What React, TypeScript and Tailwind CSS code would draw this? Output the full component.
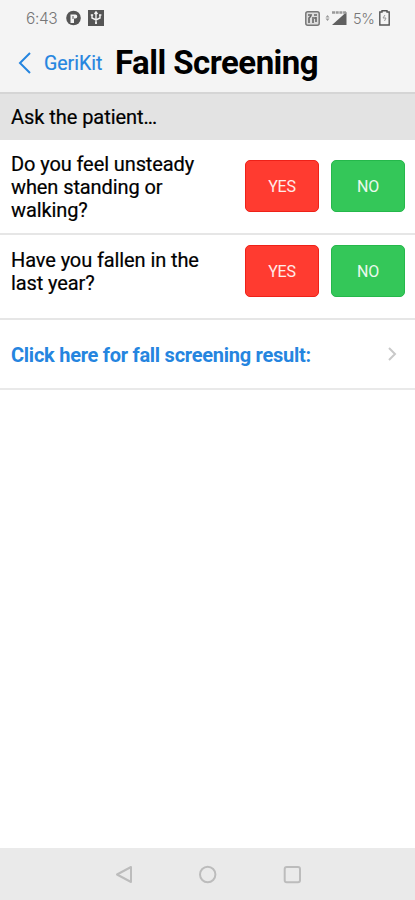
import React from "react";

function SystemBar() {
  return (
    <div className="flex h-9 items-center pl-[26px] pr-[25px] text-[#777]">
      <span className="w-[31px] whitespace-nowrap pt-px font-[Inter,sans-serif] text-[15.5px] font-light leading-5 tracking-[-0.4px]">6:43</span>
      <svg className="ml-[9px]" width="15" height="16" viewBox="0 0 15 16">
        <circle cx="7.5" cy="8" r="7.3" fill="#555" />
        <path d="M4.500 13V4.500h4.800a2 2 0 0 1 0 4H8V13Z" fill="#f4f4f4" />
        <path d="M7 6v3" stroke="#555" />
      </svg>
      <svg className="ml-[7px]" width="16" height="16" viewBox="0 0 16 16">
        <rect width="16" height="16" fill="#555" />
        <path d="M8 14V3M4 5v3l4 2 4-2V5M6.5 4 8 2l1.500 2M2.800 5h2.400M11 5h2.400M7 13h2" fill="none" stroke="#f4f4f4" strokeWidth="1.400" />
      </svg>
      <div className="grow" />
      <svg width="15" height="15" viewBox="0 0 15 15">
        <rect x=".8" y=".8" width="13.400" height="13.400" rx="2" fill="#ddd" stroke="#777" strokeWidth="1.500" />
        <path d="M4 12V7l2-2M8 12V8M11 11V6M3 4h4M9 4h3M7 7h4" fill="none" stroke="#666" strokeWidth="1.600" />
      </svg>
      <svg className="ml-[5px]" width="22" height="16" viewBox="0 0 22 16">
        <path d="M.5 7.500 2.500 5l2 2.500ZM.5 8.500l2 2.500 2-2.500Z" fill="#999" />
        <path d="M21.500 2v13H7Z" fill="#606060" />
        <path d="M7 2.500h14" stroke="#999" strokeWidth="2.500" strokeDasharray="3 .7" />
      </svg>
      <span className="ml-[6px] w-[24px] whitespace-nowrap pt-px font-[Inter,sans-serif] text-[14.5px] font-light leading-5 tracking-[-0.4px]">5%</span>
      <svg className="ml-[2px]" width="11" height="16" viewBox="0 0 11 16">
        <path d="M3 2V.8h5V2h2.200v13H.8V2Z" fill="none" stroke="#555" strokeWidth="1.400" />
        <path d="M6 5 4 8h3l-1.500 3" fill="none" stroke="#999" />
      </svg>
    </div>
  );
}

function Question({ text, className }: { text: React.ReactNode; className: string }) {
  return (
    <section className={`flex justify-between border-b-2 border-[#e6e6e6] pl-[11px] pr-[10px] ${className}`}>
      <p className="whitespace-nowrap text-[20px] leading-[23px] tracking-[-0.1px] [-webkit-text-stroke:0.2px_black]">{text}</p>
      <div className="flex gap-[12px] text-[16px] tracking-[-0.2px] text-white/90">
        <button className="h-[52px] w-[74px] rounded-[5px] border border-[#ee2118] bg-[#ff3b30] pt-px">YES</button>
        <button className="h-[52px] w-[74px] rounded-[5px] border border-[#25b84b] bg-[#34c759] pt-px">NO</button>
      </div>
    </section>
  );
}

export default function App() {
  return (
    <main className="flex h-[900px] w-[415px] flex-col overflow-hidden bg-white font-[Roboto,sans-serif] text-black">
      <header className="h-[92px] bg-[#f4f4f4]">
        <SystemBar />
        <div className="flex h-[54px] items-center pl-[18px] text-[#2585df]">
          <svg width="13" height="22" viewBox="0 0 13 22" fill="none" stroke="currentColor" strokeWidth="2">
            <path d="M12 1 2 11l10 10" />
          </svg>
          <span className="ml-[13px] w-[59px] whitespace-nowrap pt-px text-[19.500px] [-webkit-text-stroke:0.2px_#2585df]">GeriKit</span>
          <h1 className="ml-[12px] whitespace-nowrap text-[33px] font-bold leading-10 tracking-[-0.52px] text-black">Fall Screening</h1>
        </div>
      </header>
      <h2 className="h-[48px] border-t-2 border-[#d5d5d5] bg-[#e3e3e3] pl-[11px] pt-[11px] text-[20px] leading-[24px] tracking-[-0.05px] [-webkit-text-stroke:0.2px_black]">Ask the patient<span className="tracking-[-1px]">...</span></h2>
      <Question className="h-[95px] [&>div]:pt-[20px] [&>p]:pt-[13px]" text={<>Do you feel unsteady<br />when standing or<br />walking?</>} />
      <Question className="h-[85px] [&>div]:pt-[10px] [&>p]:pt-[14px]" text={<>Have you fallen in the<br />last year?</>} />
      <a className="flex h-[70px] items-center justify-between border-b-2 border-[#e9e9e9] pl-[11px] pr-[18px] text-[#2585df]">
        <span className="whitespace-nowrap pt-px text-[20px] font-bold tracking-[-0.26px]">Click here for fall screening result:</span>
        <svg width="10" height="14" viewBox="0 0 10 14" fill="none" stroke="#c9c9c9" strokeWidth="2">
          <path d="m2 1 6 6-6 6" />
        </svg>
      </a>
      <div className="grow" />
      <nav className="flex h-[52px] items-center bg-[#eaeaea] pl-[115px]">
        <svg width="187" height="20" viewBox="0 0 187 20" fill="none" stroke="#bcbcbc" strokeWidth="2" strokeLinejoin="round">
          <path d="M16 3v15L2 10.500Z" />
          <circle cx="92.700" cy="10.500" r="7.700" />
          <rect x="169.700" y="3" width="15.300" height="15.300" rx="2" />
        </svg>
      </nav>
    </main>
  );
}
